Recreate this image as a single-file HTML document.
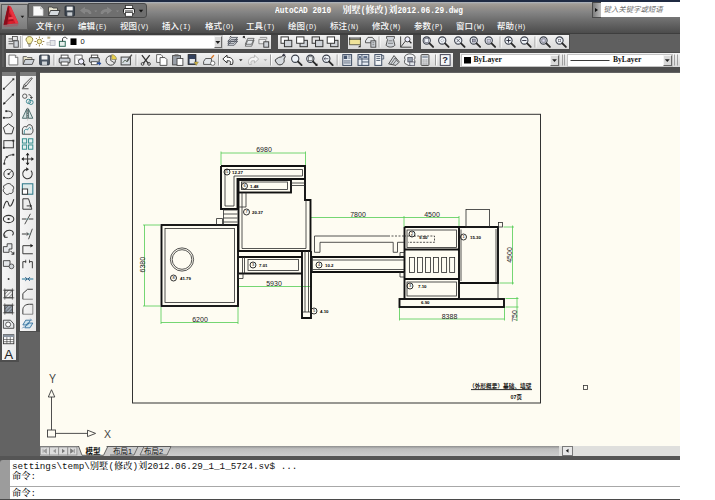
<!DOCTYPE html>
<html><head><meta charset="utf-8"><title>AutoCAD 2010</title>
<style>
html,body{margin:0;padding:0;background:#fff;}
body{width:715px;height:500px;position:relative;overflow:hidden;font-family:"Liberation Sans","Noto Sans CJK SC",sans-serif;}
#app{position:absolute;left:0;top:0;width:680px;height:500px;background:#636363;overflow:hidden;}
.abs{position:absolute;}
#topline{left:0;top:0;width:680px;height:1.5px;background:#1f2a42;}
#title{left:0;top:1.5px;width:680px;height:31px;background:linear-gradient(#b0b7c2 0,#a39e97 6%,#97928c 16%,#858585 32%,#6c6c6c 60%,#4c4c4c 100%);}
#menubar{display:none;}
#sep1{left:0;top:32.5px;width:680px;height:2px;background:#3e3e3e;}
#qat{left:28px;top:2.7px;width:118.7px;height:15.8px;background:#6f6f6f;border:1px solid #4a4a4a;box-sizing:border-box;border-radius:0 3px 3px 0;}
#logo{left:1px;top:3.5px;width:26.5px;height:26.5px;background:linear-gradient(#a2a2a2,#7a7a7a);border:1px solid #5c5c5c;box-sizing:border-box;}
.ttext{color:#fff;font-family:"Liberation Mono","Noto Serif CJK SC",monospace;font-weight:bold;font-size:9.1px;white-space:pre;line-height:10px;}
.ttext i{font-style:normal;font-size:7.8px;display:inline-block;transform:scaleY(1.22);transform-origin:50% 72%;}
.menu{color:#fafafa;font-weight:500;font-size:8.5px;line-height:12px;top:20px;white-space:pre;letter-spacing:0;}
.menu i{font-style:normal;font-family:"Liberation Mono",monospace;font-size:7px;letter-spacing:-0.3px;}
#search{left:592px;top:2px;width:88px;height:15px;background:#fff;}
#searchbtn{left:591.5px;top:2px;width:9.5px;height:15.5px;background:linear-gradient(90deg,#7c7c7c,#bcbcbc);border:1px solid #4a4a4a;border-right:none;box-sizing:border-box;}
#searchbtn:after{content:"";position:absolute;left:2.5px;top:4.5px;border-left:3.5px solid #111;border-top:2.8px solid transparent;border-bottom:2.8px solid transparent;}
#searchtxt{left:603.5px;top:4.3px;font-size:7.4px;line-height:11px;color:#707070;font-style:italic;white-space:pre;}
.tb{background:linear-gradient(#f2f2f2,#d9d9d9);}
.cb{background:#fff;border:1px solid #c4c4c4;box-sizing:border-box;}
.cbb{background:#d9d9d9;border:1px solid #f4f4f4;border-right-color:#6a6a6a;border-bottom-color:#6a6a6a;box-sizing:border-box;}
.cbt{font-family:"Liberation Serif",serif;font-weight:bold;font-size:7.6px;line-height:10px;color:#111;white-space:pre;}
.ltb{background:linear-gradient(90deg,#f6f6f6,#e9e9e9);}
.lgrip{background:#7c7c7c;}
.tabt{font-size:7.5px;line-height:9px;color:#111;white-space:pre;font-family:"Liberation Sans","Noto Sans CJK SC",sans-serif;}
#draw{left:39.5px;top:72.5px;width:640.5px;height:373.5px;background:#fefcf2;}
#cmd{left:0;top:458px;width:680px;height:42px;background:#fff;}
.cmdt{font-family:"Liberation Mono","Noto Serif CJK SC",monospace;font-size:9.27px;line-height:11px;color:#111;white-space:pre;font-weight:500;}
</style></head><body>
<div id="app" class="abs">
<div id="topline" class="abs"></div>
<div id="title" class="abs"></div>
<div id="menubar" class="abs"></div>
<div id="sep1" class="abs"></div>
<div id="qat" class="abs"></div>
<div id="logo" class="abs"></div>
<div class="abs ttext" id="tt1" style="left:275px;top:5.5px;"><i>AutoCAD 2010</i></div>
<div class="abs ttext" id="tt2" style="left:342.5px;top:5.5px;">别墅<i>(</i>修改<i>)</i>刘<i>2012.06.29.dwg</i></div>
<!-- QAT-START -->
<svg class="abs" style="left:0;top:0" width="160" height="34" viewBox="0 0 160 34">
<defs><linearGradient id="lgA" x1="0" y1="0" x2="1" y2="0"><stop offset="0" stop-color="#8e1020"/><stop offset="0.45" stop-color="#e0222e"/><stop offset="1" stop-color="#c01424"/></linearGradient></defs>
<!-- logo A -->
<path d="M3 25.300L18.800 23.600L17.500 26.200L4.500 27Z" fill="#b04a58" opacity="0.45"/>
<path d="M8 5.600L3.600 24.800L18.400 23.200L10.800 6.600Z" fill="url(#lgA)"/>
<path d="M8 5.600L3.600 24.800L7.200 24.400L9.300 9Z" fill="#8a0c1a"/>
<path d="M9.300 12.500L8 21.500L13.600 20.800Z" fill="#a81020"/>
<path d="M8.600 17.200L13 16.800L14 19L8.300 19.600Z" fill="#ee4450"/>
<path d="M9.300 9L10.800 6.600L18.400 23.200L15.500 23.500Z" fill="#e83442"/>
<path d="M20.600 15.800H24.200L22.400 17.900Z" fill="#1a1a1a"/>
<!-- new -->
<path d="M33.500 6.500H40.500L43 9V15.500H33.500Z" fill="#fafafa" stroke="#d0d0d0" stroke-width="0.800"/><path d="M40.500 6.500V9H43" fill="#cfcfcf" stroke="#bbb" stroke-width="0.600"/>
<!-- open -->
<path d="M48.500 15.500V7H52L53 8H57.500V10" fill="#e8e4d0" stroke="#444" stroke-width="0.900"/><path d="M48.500 15.500L50.500 10.500H60L58 15.500Z" fill="#d6dade" stroke="#333" stroke-width="0.900"/>
<!-- save -->
<rect x="65" y="6" width="9.500" height="10" rx="1" fill="#3d4650" stroke="#2a3038" stroke-width="0.900"/><rect x="66.700" y="6.600" width="6" height="3.800" fill="#f0f0f0"/><rect x="67.300" y="12.300" width="5" height="3.500" fill="#c8ccd0"/>
<!-- undo/redo disabled -->
<path d="M80.500 10.500L84.500 7.500V9.500C89 9.500 91 11 91 13.500H89C88.500 12 87.500 11.500 84.500 11.500V13.500Z" fill="#858585" stroke="#8f8f8f" stroke-width="0.600"/>
<path d="M94.300 10.500H97.300L95.800 12.300Z" fill="#888"/>
<path d="M111.500 10.500L107.500 7.500V9.500C103 9.500 101 11 101 13.500H103C103.500 12 104.500 11.500 107.500 11.500V13.500Z" fill="#858585" stroke="#8f8f8f" stroke-width="0.600"/>
<path d="M116 10.500H119L117.500 12.300Z" fill="#888"/>
<!-- plot -->
<rect x="125.500" y="5.500" width="7" height="3.500" fill="#fff" stroke="#333" stroke-width="0.800"/><rect x="123.500" y="8.500" width="11" height="5.500" rx="1.500" fill="#f2f2f2" stroke="#222" stroke-width="1"/><rect x="125.500" y="12.500" width="7" height="3.800" fill="#fff" stroke="#333" stroke-width="0.800"/><path d="M125 11H133" stroke="#333" stroke-width="1"/>
<path d="M138.800 9.800H143.200L141 12.500Z" fill="#111"/>
</svg>
<!-- QAT-END -->
<!-- menus -->
<div class="abs menu" style="left:36px;">文件<i>(F)</i></div>
<div class="abs menu" style="left:78px;">编辑<i>(E)</i></div>
<div class="abs menu" style="left:120px;">视图<i>(V)</i></div>
<div class="abs menu" style="left:162px;">插入<i>(I)</i></div>
<div class="abs menu" style="left:205px;">格式<i>(O)</i></div>
<div class="abs menu" style="left:246px;">工具<i>(T)</i></div>
<div class="abs menu" style="left:288px;">绘图<i>(D)</i></div>
<div class="abs menu" style="left:330px;">标注<i>(N)</i></div>
<div class="abs menu" style="left:372px;">修改<i>(M)</i></div>
<div class="abs menu" style="left:414px;">参数<i>(P)</i></div>
<div class="abs menu" style="left:456px;">窗口<i>(W)</i></div>
<div class="abs menu" style="left:497px;">帮助<i>(H)</i></div>
<div id="search" class="abs"></div>
<div id="searchbtn" class="abs"></div>
<div id="searchtxt" class="abs">键入关键字或短语</div>
<!-- TOOLBARS -->
<div class="abs" style="left:0;top:34.5px;width:680px;height:37.5px;background:#4e4e4e;"></div>
<div class="abs" style="left:570px;top:34px;width:110px;height:18px;background:#5f5f5f;"></div>
<div class="abs" style="left:0;top:71px;width:39.5px;height:260.5px;background:#4e4e4e;"></div>
<div class="abs" style="left:0;top:331px;width:18.5px;height:30.5px;background:#4e4e4e;"></div>
<div class="abs" style="left:2px;top:35px;width:2px;height:32px;background:#5c5c5c;"></div>
<!-- TB-START -->
<div class="abs tb" style="left:6px;top:34.5px;width:265px;height:14.5px;"></div>
<div class="abs tb" style="left:278px;top:34.5px;width:62px;height:14.5px;"></div>
<div class="abs tb" style="left:348px;top:34.5px;width:65px;height:14.5px;"></div>
<div class="abs tb" style="left:421px;top:34.5px;width:148px;height:14.5px;"></div>
<div class="abs tb" style="left:6px;top:53px;width:447px;height:14px;"></div>
<div class="abs tb" style="left:460px;top:53px;width:220px;height:14px;"></div>
<div class="abs cb" style="left:22px;top:35px;width:200.5px;height:13.5px;"></div>
<div class="abs cbb" style="left:213.5px;top:36px;width:8.5px;height:12px;"></div>
<div class="abs cb" style="left:461px;top:53.5px;width:98.5px;height:13px;"></div>
<div class="abs cbb" style="left:550px;top:54.5px;width:9px;height:11.5px;"></div>
<div class="abs cb" style="left:567px;top:53.5px;width:105.5px;height:13px;"></div>
<div class="abs cbb" style="left:662.5px;top:54.5px;width:9.5px;height:11.5px;"></div>
<div class="abs cbt" style="left:80.500px;top:37px;font-family:Liberation Sans,sans-serif;font-weight:normal;font-size:7.5px;">0</div>
<div class="abs cbt" style="left:473.500px;top:55px;">ByLayer</div>
<div class="abs cbt" style="left:613px;top:55px;">ByLayer</div>
<svg class="abs" style="left:0;top:0" width="680" height="80" viewBox="0 0 680 80"><g transform="translate(13.4 41.8) scale(0.98)"><path d="M-5 -3H0M-5 -0.500H0M-5 2H0" stroke="#444" stroke-width="0.9"/><rect x="-1" y="-5.500" width="5" height="4" fill="#e8e8e8" stroke="#444" stroke-width="0.800"/><rect x="0.500" y="-1" width="4.500" height="6.500" fill="#cfd3d8" stroke="#444" stroke-width="0.900"/></g>
<path d="M20.8 36V48" stroke="#9a9a9a" stroke-width="1"/><path d="M21.8 36V48" stroke="#fff" stroke-width="0.800"/>
<g transform="translate(29.4 41.5) scale(0.9)"><path d="M0 -5.500C3 -5.500 4.300 -3 3.500 -1C2.800 0.500 1.800 1 1.800 2.500H-1.800C-1.800 1 -2.800 0.500 -3.500 -1C-4.300 -3 -3 -5.500 0 -5.500Z" fill="#f6f0a8" stroke="#776a2a" stroke-width="0.900"/><path d="M-1.500 3.800H1.500M-1 5.200H1" stroke="#555" stroke-width="0.900"/></g>
<g transform="translate(39.4 41.5) scale(0.9)"><circle cx="0" cy="0" r="2.500" fill="#fbf2b0" stroke="#8a7a2a" stroke-width="0.900"/><path d="M0 -5.500V-3.600M0 5.500V3.600M-5.500 0H-3.600M5.500 0H3.600M-3.900 -3.900L-2.600 -2.600M3.900 3.900L2.600 2.600M-3.900 3.900L-2.600 2.600M3.900 -3.900L2.600 -2.600" stroke="#8a6a2a" stroke-width="0.900"/></g>
<g transform="translate(51 41.8) scale(0.9)"><path d="M-4.500 -4.500H-0.500M-2.500 -6V-3M-4 -5.500L-1 -3.500M-1 -5.500L-4 -3.500" stroke="#b9a97a" stroke-width="0.700"/><rect x="-1" y="-1.500" width="5.500" height="5.500" fill="#e6e8ea" stroke="#aab" stroke-width="0.800"/><rect x="-4.500" y="0.500" width="4" height="3" fill="#eee" stroke="#bbb" stroke-width="0.700"/></g>
<g transform="translate(63 41.8) scale(0.9)"><rect x="-4" y="-0.500" width="6.500" height="5.500" fill="#e8f0ec" stroke="#2f6a5a" stroke-width="1.100"/><path d="M-0.500 -0.500V-3C-0.500 -5.500 4 -6 4.500 -3" fill="none" stroke="#333" stroke-width="1.100"/></g>
<rect x="70.500" y="38.400" width="6" height="6.600" fill="#000"/>
<g transform="translate(217.8 42.2) scale(1.35)"><path d="M-1.800 -0.800H1.800L0 1.300Z" fill="#222"/></g>
<g transform="translate(232.7 41.8) scale(0.98)"><path d="M-5 3.500L-1.500 -0.500H5L1.500 3.500ZM-5 1.500L-1.500 -2.500H5L1.500 1.500ZM-5 -0.500L-1.500 -4.500H5L1.500 -0.500Z" fill="#e6e9ec" stroke="#3a3f4a" stroke-width="0.800"/><path d="M-3 -4.500L-1.500 -6" stroke="#333" stroke-width="1"/></g>
<g transform="translate(248.7 41.8) scale(0.98)"><path d="M-3.500 4.500L-1 -1.500H5.500L3 4.500ZM-3.500 2.500L-1 -3.500H5.500L3 2.500Z" fill="#e6e9ec" stroke="#555" stroke-width="0.800"/><path d="M-5.500 -5.500L-3.500 -3.500M-5.500 -5.500H-3.800M-5.500 -5.500V-3.800" stroke="#222" stroke-width="1"/></g>
<g transform="translate(263.8 41.8) scale(0.98)"><path d="M-5 -2.500H2V2H-5ZM-4 -4.500H3V-2.500" fill="#eee" stroke="#777" stroke-width="0.800"/><rect x="0" y="0" width="5" height="5.500" fill="#cfd3d8" stroke="#333" stroke-width="0.900"/></g>
<g transform="translate(286.4 41.8) scale(0.98)"><rect x="-5.500" y="-5" width="7.500" height="6.500" fill="#fff" stroke="#333" stroke-width="1"/><rect x="-2" y="-1.500" width="7.500" height="6.500" fill="#cfd3d8" stroke="#333" stroke-width="1"/></g>
<g transform="translate(302 41.8) scale(0.98)"><rect x="-2" y="-1.500" width="7.500" height="6.500" fill="#cfd3d8" stroke="#333" stroke-width="1"/><rect x="-5.500" y="-5" width="7.500" height="6.500" fill="#fff" stroke="#333" stroke-width="1"/></g>
<g transform="translate(317.5 41.8) scale(0.98)"><rect x="-5.500" y="-5" width="7.500" height="6.500" fill="#e6e6e6" stroke="#333" stroke-width="1"/><rect x="-2" y="-1.500" width="7.500" height="6.500" fill="#cfd3d8" stroke="#333" stroke-width="1"/></g>
<g transform="translate(332.6 41.8) scale(0.98)"><rect x="-2" y="-1.500" width="7.500" height="6.500" fill="#cfd3d8" stroke="#333" stroke-width="1"/><rect x="-5.500" y="-5" width="7.500" height="6.500" fill="#fff" stroke="#333" stroke-width="1"/></g>
<g transform="translate(355 41.8) scale(0.98)"><rect x="-5.500" y="-2.500" width="11" height="5.500" fill="#efe39a" stroke="#554" stroke-width="0.900"/><path d="M-5.500 -4.500V-2M5.500 -4.500V-2M-5.500 -3.800H5.500" stroke="#222" stroke-width="0.900"/><path d="M3 5.500H5.800V3Z" fill="#222"/></g>
<g transform="translate(370.4 41.8) scale(0.98)"><path d="M-5 -1L-2.500 -4.500H2L4 -2V1H-5Z" fill="#e4e7ea" stroke="#444" stroke-width="0.900"/><rect x="0.500" y="-1" width="5" height="6.500" fill="#cfd3d8" stroke="#444" stroke-width="0.900"/><path d="M2 1H4M2 3H4" stroke="#555" stroke-width="0.700"/></g>
<g transform="translate(390.5 41.8) scale(0.98)"><path d="M-4 -5.500H4V-3.500L3 -2.500L4.500 3.500C3 6 -3 6 -4.500 3.500L-3 -2.500L-4 -3.500Z" fill="#cfd3d8" stroke="#444" stroke-width="0.900"/><path d="M-2 -1H2M-2.500 1.500H2.500" stroke="#555" stroke-width="0.700"/></g>
<g transform="translate(406 41.8) scale(0.98)"><path d="M-5.500 -5.500V5.500H5.500M-5.500 5.500L0 -1.500" stroke="#333" stroke-width="0.900" fill="none"/><circle cx="1.500" cy="-2.500" r="2.600" fill="#eef" stroke="#333" stroke-width="0.900"/><path d="M3.300 -0.700L5.500 1.500" stroke="#222" stroke-width="1.300"/></g>
<g transform="translate(428 41.8) scale(0.98)"><circle cx="-1.3" cy="-1.3" r="3.7" fill="#eef3f8" stroke="#3a3f4a" stroke-width="1.1"/><path d="M1.6 1.6L5.2 5.2" stroke="#2b2b2b" stroke-width="1.9" stroke-linecap="round"/><rect x="-3.300" y="-3.300" width="4" height="4" fill="none" stroke="#667" stroke-width="0.700"/></g>
<g transform="translate(443.5 41.8) scale(0.98)"><circle cx="-1.3" cy="-1.3" r="3.7" fill="#eef3f8" stroke="#3a3f4a" stroke-width="1.1"/><path d="M1.6 1.6L5.2 5.2" stroke="#2b2b2b" stroke-width="1.9" stroke-linecap="round"/><path d="M-3 -1.300L-1.300 -3L0.400 -1.300L-1.300 0.400Z" fill="none" stroke="#667" stroke-width="0.600" stroke-dasharray="1 0.600"/></g>
<g transform="translate(459.5 41.8) scale(0.98)"><circle cx="-1.3" cy="-1.3" r="3.7" fill="#eef3f8" stroke="#3a3f4a" stroke-width="1.1"/><path d="M1.6 1.6L5.2 5.2" stroke="#2b2b2b" stroke-width="1.9" stroke-linecap="round"/><path d="M-3.300 -3.300L0.700 0.700M0.700 -3.300L-3.300 0.700" stroke="#445" stroke-width="0.800"/></g>
<g transform="translate(475 41.8) scale(0.98)"><circle cx="-1.3" cy="-1.3" r="3.7" fill="#eef3f8" stroke="#3a3f4a" stroke-width="1.1"/><path d="M1.6 1.6L5.2 5.2" stroke="#2b2b2b" stroke-width="1.9" stroke-linecap="round"/><rect x="-2.800" y="-2.800" width="3" height="3" fill="#aab" stroke="#445" stroke-width="0.600"/></g>
<g transform="translate(490 41.8) scale(0.98)"><circle cx="-1.3" cy="-1.3" r="3.7" fill="#eef3f8" stroke="#3a3f4a" stroke-width="1.1"/><path d="M1.6 1.6L5.2 5.2" stroke="#2b2b2b" stroke-width="1.9" stroke-linecap="round"/><path d="M-3 -2.500H0.500V0.500H-3Z" fill="#ccd" stroke="#667" stroke-width="0.600"/></g>
<g transform="translate(509.8 41.8) scale(0.98)"><circle cx="-1.3" cy="-1.3" r="3.7" fill="#eef3f8" stroke="#3a3f4a" stroke-width="1.1"/><path d="M1.6 1.6L5.2 5.2" stroke="#2b2b2b" stroke-width="1.9" stroke-linecap="round"/><path d="M-3.500 -1.300H0.900M-1.300 -3.500V0.900" stroke="#223" stroke-width="0.900"/></g>
<g transform="translate(525.6 41.8) scale(0.98)"><circle cx="-1.3" cy="-1.3" r="3.7" fill="#eef3f8" stroke="#3a3f4a" stroke-width="1.1"/><path d="M1.6 1.6L5.2 5.2" stroke="#2b2b2b" stroke-width="1.9" stroke-linecap="round"/><path d="M-3.500 -1.300H0.900" stroke="#223" stroke-width="0.900"/></g>
<g transform="translate(544.8 41.8) scale(0.98)"><circle cx="-1.3" cy="-1.3" r="3.7" fill="#eef3f8" stroke="#3a3f4a" stroke-width="1.1"/><path d="M1.6 1.6L5.2 5.2" stroke="#2b2b2b" stroke-width="1.9" stroke-linecap="round"/><rect x="-3" y="-3" width="3.400" height="3.400" fill="#dde" stroke="#556" stroke-width="0.700"/></g>
<g transform="translate(560.8 41.8) scale(0.98)"><circle cx="-1.3" cy="-1.3" r="3.7" fill="#eef3f8" stroke="#3a3f4a" stroke-width="1.1"/><path d="M1.6 1.6L5.2 5.2" stroke="#2b2b2b" stroke-width="1.9" stroke-linecap="round"/><path d="M-3.300 -3.300L0.700 0.700M0.700 -3.300L-3.300 0.700" stroke="#445" stroke-width="0.700"/><circle cx="-1.300" cy="-1.300" r="1" fill="#fff" stroke="#445" stroke-width="0.500"/></g>
<path d="M379.1 36.5V47.5" stroke="#9a9a9a" stroke-width="1"/><path d="M380.1 36.5V47.5" stroke="#fff" stroke-width="0.800"/>
<path d="M500.1 36.5V47.5" stroke="#9a9a9a" stroke-width="1"/><path d="M501.1 36.5V47.5" stroke="#fff" stroke-width="0.800"/>
<path d="M535.0 36.5V47.5" stroke="#9a9a9a" stroke-width="1"/><path d="M536.0 36.5V47.5" stroke="#fff" stroke-width="0.800"/>
<g transform="translate(13.4 60) scale(0.98)"><path d="M-4.5 -5H2L4.500 -2.500V5H-4.500Z" fill="#fff" stroke="#666" stroke-width="0.9"/><path d="M2 -5V-2.500H4.500" fill="#ddd" stroke="#666" stroke-width="0.8"/></g>
<g transform="translate(28.5 60) scale(0.98)"><path d="M-5.500 4.500V-3.500H-2L-1 -2.500H3.500V-0.500" fill="#e9e3c8" stroke="#555" stroke-width="0.9"/><path d="M-5.500 4.500L-3.500 -0.500H5.800L3.800 4.500Z" fill="#cfd4da" stroke="#444" stroke-width="0.9"/></g>
<g transform="translate(44.5 60) scale(0.98)"><rect x="-5" y="-5" width="10" height="10" rx="1" fill="#4a5563" stroke="#2c333d" stroke-width="0.9"/><rect x="-3" y="-4.500" width="6" height="4" fill="#f4f4f4"/><rect x="-2.500" y="1.500" width="5" height="3.500" fill="#d0d4d8"/></g>
<g transform="translate(64.6 60) scale(0.98)"><rect x="-3.500" y="-5" width="7" height="3.500" fill="#fff" stroke="#444" stroke-width="0.9"/><rect x="-5.500" y="-2" width="11" height="5" rx="1" fill="#c9ced4" stroke="#333" stroke-width="1"/><rect x="-3.500" y="2" width="7" height="3.300" fill="#fff" stroke="#444" stroke-width="0.9"/></g>
<g transform="translate(79.7 60) scale(0.98)"><path d="M-5 -5H2.500V1M-5 -5V4.500H-0.500" fill="#fff" stroke="#555" stroke-width="0.9"/><circle cx="1.500" cy="1.500" r="2.800" fill="#eef" stroke="#333" stroke-width="1"/><path d="M3.600 3.600L5.500 5.500" stroke="#222" stroke-width="1.600"/></g>
<g transform="translate(94.8 60) scale(0.98)"><rect x="-3.500" y="-5" width="6.500" height="3" fill="#fff" stroke="#444" stroke-width="0.9"/><rect x="-5.500" y="-2.300" width="10" height="4.600" rx="1" fill="#c9ced4" stroke="#333" stroke-width="1"/><rect x="-3.500" y="1.800" width="6" height="3" fill="#fff" stroke="#444" stroke-width="0.8"/><path d="M2 3.500H5.500M4 2L5.800 3.600L4 5.200" stroke="#2a4f9a" stroke-width="1.200" fill="none"/></g>
<g transform="translate(111.2 60) scale(0.98)"><circle cx="-0.500" cy="0.500" r="4.800" fill="#e8e8e8" stroke="#444" stroke-width="1"/><path d="M-0.500 0.500V-4.300M-0.500 0.500L3.500 3" stroke="#444" stroke-width="0.9"/><path d="M0.500 -5.500A5 5 0 0 1 5.500 -0.500L0.500 -0.500Z" fill="#e8d04a" stroke="#776" stroke-width="0.600"/></g>
<g transform="translate(126.5 60) scale(0.98)"><rect x="-5.500" y="-3" width="9.500" height="8" fill="#d8dde2" stroke="#444" stroke-width="1"/><path d="M-4 3L-1.500 0L0.500 2L2.500 -1" stroke="#5a6a5a" stroke-width="0.9" fill="none"/><path d="M5.500 -5.500L0.500 1" stroke="#555" stroke-width="1.400"/></g>
<g transform="translate(145.8 60) scale(0.98)"><path d="M-4 -5L2.500 3.500M4 -5L-2.500 3.500" stroke="#333" stroke-width="1.300"/><circle cx="-3.300" cy="4" r="1.400" fill="none" stroke="#333" stroke-width="0.9"/><circle cx="3.300" cy="4" r="1.400" fill="none" stroke="#333" stroke-width="0.9"/></g>
<g transform="translate(162 60) scale(0.98)"><path d="M-5.500 -5.500H-1L0.500 -4V2.500H-5.500Z" fill="#fff" stroke="#555" stroke-width="0.9"/><path d="M-2 -2.500H3L5 -0.500V5.500H-2Z" fill="#fff" stroke="#444" stroke-width="0.9"/></g>
<g transform="translate(178 60) scale(0.98)"><rect x="-5.500" y="-4.500" width="8" height="9.500" fill="#9aa0a8" stroke="#444" stroke-width="0.9"/><rect x="-3.500" y="-5.800" width="4" height="2" fill="#666"/><rect x="-1" y="-1.500" width="6" height="7" fill="#fff" stroke="#444" stroke-width="0.9"/></g>
<g transform="translate(193 60) scale(0.98)"><rect x="-5" y="-5.500" width="8" height="10" fill="#34425e" stroke="#222" stroke-width="0.800"/><rect x="-3.500" y="-1" width="5.500" height="4.500" fill="#e4e7ea"/><path d="M1 2L5.500 2L3.300 5.500Z" fill="#d6b43a" stroke="#775" stroke-width="0.500"/></g>
<g transform="translate(209 60) scale(0.98)"><path d="M-5.500 1.500L-3.500 -1.500H2.500V4.500H-5.500Z" fill="#e4e7ea" stroke="#444" stroke-width="0.9"/><circle cx="3.800" cy="3.300" r="2.200" fill="#fff" stroke="#555" stroke-width="0.800"/><path d="M2.500 -2L5 -5" stroke="#d8782a" stroke-width="1.500"/></g>
<g transform="translate(228.5 60) scale(0.98)"><path d="M-5.800 -1L-1.500 -5V-2.800C4 -3 5.500 0.500 4 4.500H1.500C3 1.500 2 0.600 -1.500 0.800V3Z" fill="#fff" stroke="#2d2d2d" stroke-width="1"/></g>
<g transform="translate(240.8 60) scale(0.98)"><path d="M-1.800 -0.800H1.800L0 1.300Z" fill="#222"/></g>
<g transform="translate(253 60) scale(0.98)"><path d="M5.800 -1L1.500 -5V-2.800C-4 -3 -5.500 0.500 -4 4.500H-1.500C-3 1.500 -2 0.600 1.500 0.800V3Z" fill="#f4f4f4" stroke="#b4b4b4" stroke-width="1"/></g>
<g transform="translate(265.4 60) scale(0.98)"><path d="M-1.800 -0.800H1.800L0 1.300Z" fill="#aaa"/></g>
<g transform="translate(280.5 60) scale(0.98)"><path d="M-5.500 0C-3 -2 -1 -3.500 1 -3L3 -5.500L5 -3.500L3.500 -1C4.500 1.500 3 4.500 -0.500 5C-3 5 -4.500 3 -5.500 0Z" fill="#d6dade" stroke="#3a3a3a" stroke-width="1"/><path d="M3.500 -6.500V-3.500M2 -5H5" stroke="#223" stroke-width="0.9"/></g>
<g transform="translate(296.5 60) scale(0.98)"><circle cx="-1.3" cy="-1.3" r="3.7" fill="#eef3f8" stroke="#3a3f4a" stroke-width="1.1"/><path d="M1.6 1.6L5.2 5.2" stroke="#2b2b2b" stroke-width="1.9" stroke-linecap="round"/></g>
<g transform="translate(311.6 60) scale(0.98)"><circle cx="-1.3" cy="-1.3" r="3.7" fill="#eef3f8" stroke="#3a3f4a" stroke-width="1.1"/><path d="M1.6 1.6L5.2 5.2" stroke="#2b2b2b" stroke-width="1.9" stroke-linecap="round"/><rect x="-3.300" y="-3.300" width="4" height="4" fill="none" stroke="#555" stroke-width="0.700"/><path d="M3.500 5.500H5.800V3.200Z" fill="#222"/></g>
<g transform="translate(327.6 60) scale(0.98)"><circle cx="-1.3" cy="-1.3" r="3.7" fill="#eef3f8" stroke="#3a3f4a" stroke-width="1.1"/><path d="M1.6 1.6L5.2 5.2" stroke="#2b2b2b" stroke-width="1.9" stroke-linecap="round"/><path d="M-3.500 -1.300H0.800M-2 -2.800L-3.600 -1.300L-2 0.200" stroke="#445" stroke-width="0.800" fill="none"/></g>
<g transform="translate(347.2 60) scale(0.98)"><rect x="-4.500" y="-5.500" width="9" height="11" fill="#e6ebf2" stroke="#3c4a60" stroke-width="1"/><rect x="-3.500" y="-4.500" width="3.500" height="3.500" fill="#44546e"/><path d="M-3.500 1H3.500M-3.500 3H3.500M1 -4H3.500M1 -2H3.500" stroke="#3c4a60" stroke-width="0.800"/></g>
<g transform="translate(363.4 60) scale(0.98)"><rect x="-5.500" y="-5.500" width="11" height="11" fill="#e6ebf2" stroke="#3c4a60" stroke-width="1"/><path d="M-1.500 -5.500V5.500M-5.500 -1H5.500M-1.500 2H5.500" stroke="#3c4a60" stroke-width="0.9"/><rect x="0" y="-4" width="4" height="2" fill="#5a6a86"/><rect x="-4.500" y="-4" width="2" height="2" fill="#5a6a86"/></g>
<g transform="translate(378.8 60) scale(0.98)"><rect x="-4" y="-5.500" width="7" height="11" fill="#f2f4f6" stroke="#3c4a60" stroke-width="1"/><path d="M-2.500 -3.500H1.500M-2.500 -1.500H1.500M-2.500 0.500H1.500M3 -4.500H5V-1H3" stroke="#3c4a60" stroke-width="0.800" fill="none"/></g>
<g transform="translate(394 60) scale(0.98)"><path d="M-5.500 4L0 -4.500L5.500 2L2 5.500Z" fill="#d2d6da" stroke="#444" stroke-width="0.9"/><path d="M-3.500 4.500L1 -2L4 2M-1.500 5L2.500 0" stroke="#555" stroke-width="0.800" fill="none"/></g>
<g transform="translate(409.8 60) scale(0.98)"><path d="M-3 -5.500C-1 -6.500 1 -6.500 3 -5.500C5.500 -5 6 -2 4.500 -0.500C6 1.500 5 4.500 2.500 4.500C0.500 6 -1.500 6 -3 4.500C-5.500 4.500 -6 1.500 -4.800 -0.500C-6 -2.500 -5 -5 -3 -5.500Z" fill="#f2f4f6" stroke="#444" stroke-width="0.9"/><rect x="-2" y="-2.500" width="4.500" height="4.500" fill="#9aa4b0" stroke="#445" stroke-width="0.700"/><rect x="0" y="2" width="5" height="3.500" fill="#dfe3e8" stroke="#445" stroke-width="0.700"/></g>
<g transform="translate(425 60) scale(0.98)"><rect x="-4" y="-5.500" width="8" height="11" rx="0.800" fill="#e9ebee" stroke="#444" stroke-width="1"/><rect x="-2.800" y="-4.300" width="5.600" height="2.300" fill="#9aa4b0"/><path d="M-2.500 0H2.500M-2.500 2H2.500M-2.500 4H2.500" stroke="#666" stroke-width="0.900" stroke-dasharray="1.200 0.700"/></g>
<g transform="translate(445.2 60) scale(0.98)"><rect x="-5" y="-5.500" width="10" height="11" fill="#f4f6f8" stroke="#445" stroke-width="1"/><text x="0" y="3.500" font-size="9.500" font-weight="bold" text-anchor="middle" font-family="Liberation Sans,sans-serif" fill="#223">?</text></g>
<path d="M54.0 54.5V65.5" stroke="#9a9a9a" stroke-width="1"/><path d="M55.0 54.5V65.5" stroke="#fff" stroke-width="0.800"/>
<path d="M136.0 54.5V65.5" stroke="#9a9a9a" stroke-width="1"/><path d="M137.0 54.5V65.5" stroke="#fff" stroke-width="0.800"/>
<path d="M218.5 54.5V65.5" stroke="#9a9a9a" stroke-width="1"/><path d="M219.5 54.5V65.5" stroke="#fff" stroke-width="0.800"/>
<path d="M270.5 54.5V65.5" stroke="#9a9a9a" stroke-width="1"/><path d="M271.5 54.5V65.5" stroke="#fff" stroke-width="0.800"/>
<path d="M337.2 54.5V65.5" stroke="#9a9a9a" stroke-width="1"/><path d="M338.2 54.5V65.5" stroke="#fff" stroke-width="0.800"/>
<path d="M435.5 54.5V65.5" stroke="#9a9a9a" stroke-width="1"/><path d="M436.5 54.5V65.5" stroke="#fff" stroke-width="0.800"/>
<rect x="464" y="57" width="7" height="6.500" fill="#000"/>
<g transform="translate(554.5 60.3) scale(1.35)"><path d="M-1.800 -0.800H1.800L0 1.300Z" fill="#222"/></g>
<g transform="translate(667.3 60.3) scale(1.35)"><path d="M-1.800 -0.800H1.800L0 1.300Z" fill="#222"/></g>
<path d="M570.500 60.500H609.500" stroke="#222" stroke-width="0.900"/>
<path d="M562.500 54.500V65.500M564.500 54.500V65.500M674.500 54.500V65.500M677.500 54.500V65.500" stroke="#999" stroke-width="0.900"/></svg>
<!-- TB-END -->
<!-- drawing -->
<div id="draw" class="abs"></div>
<!-- DRAWING-SVG-START -->
<svg class="abs" style="left:0;top:0" width="680" height="500" viewBox="0 0 680 500">
<g fill="none" stroke="#222" stroke-width="1" shape-rendering="auto">
<!-- paper -->
<rect x="132.500" y="114.300" width="408" height="288.700" stroke="#333" stroke-width="1"/>
</g>
<!-- green dims -->
<g fill="none" stroke="#52cc52" stroke-width="0.8">
<path d="M221 153H305.5M221 151.5V165M305.5 151.5V165"/>
<path d="M144.5 225V306M143 225H160M143 306H160"/>
<path d="M161 322.5H238M161 307V324M238 307V324"/>
<path d="M238.5 286.5H311M238.5 278V288M311 273V288"/>
<path d="M311 217.5H404M404 217.5H459M404 216V227M459 216V227"/>
<path d="M512.500 225.500V284.500M503.500 227H514M499.500 283H514"/>
<path d="M399.5 319H504.5M399.500 307V320.5M504.500 307V320.500"/>
<path d="M517 297V321M505.500 298.500H518.500M505.500 307H518.500"/>
</g>
<!-- thick walls -->
<g fill="none" stroke="#111" stroke-width="1.9" stroke-linejoin="miter">
<!-- L shape -->
<path d="M221 166H305V200H310.500V251M221 166V209H237.500V179H305"/>
<!-- room 6 bar -->
<rect x="238.500" y="180" width="52.500" height="12.500"/>
<!-- room 7 -->
<path d="M238.500 192.500V251H310.500"/>
<!-- square room 8 -->
<rect x="161.500" y="225" width="76.500" height="81"/>
<!-- room 3 bar -->
<path d="M238.500 257H302M238.500 273.500H302"/>
<!-- vertical bar -->
<path d="M302 251V318H311V251"/>
<!-- corridor -->
<path d="M311 257H404M311 272H404"/>
<!-- right building -->
<path d="M404.500 227H498V283H459V227M404.500 227V298.500M404.500 249.500H459M404.500 279H459M459 283V298.500"/>
<rect x="399.500" y="299" width="104.500" height="8"/>
</g>
<!-- thin lines -->
<g fill="none" stroke="#2a2a2a" stroke-width="0.8">
<path d="M225 169.500H302.500V176H234V206H225Z"/>
<rect x="241.500" y="182" width="46" height="7.500"/>
<path d="M291 183H305M291 185.500H305"/>
<path d="M242 192.500V248.500H306V200M246 192.500V207H238.500"/>
<path d="M223.500 210H237.500M223.500 214H237.500M223.500 218H237.500M223.500 222H237.500M223.500 209V225M216.500 218.500H222.500V225H216.500Z"/>
<rect x="165" y="228.500" width="69.500" height="74"/>
<circle cx="182" cy="259.500" r="11.600"/><circle cx="182" cy="259.500" r="9.800"/>
<rect x="248" y="259.500" width="50.500" height="11"/>
<path d="M242.500 257V273.500M238.500 273.500V278.500H243V273.500M244.500 257V273.500"/>
<path d="M305 251V312M308.500 251V312M302 312H311"/>
<path d="M312.500 260H404M312.500 269.500H404M312.500 257V272"/>
<path d="M314.500 252.300V236H388M320 252.300V242.300H393.200V252.300M397.500 252.300V242.300H404M314.500 252.300H320M393.200 252.300H397.500"/>
<path d="M388 236H404" stroke-dasharray="2 1.500"/>
<path d="M404 236H434.500V242.300H408" stroke-dasharray="2 1.300"/>
<path d="M400 252.500H404.500V257H400ZM400 272H404.500V277H400Z"/>
<rect x="407" y="230" width="49.500" height="17.500"/>
<rect x="407" y="282" width="49.500" height="14"/>
<rect x="409.50" y="257.500" width="5" height="15"/><rect x="417.53" y="257.500" width="5" height="15"/><rect x="425.56" y="257.500" width="5" height="15"/><rect x="433.59" y="257.500" width="5" height="15"/><rect x="441.62" y="257.500" width="5" height="15"/><rect x="449.65" y="257.500" width="5" height="15"/>
<path d="M461 229.500V281M496 229V283M459 298.500H498V283"/>
<rect x="466" y="209.500" width="23.500" height="17.500"/>
<rect x="498.500" y="222.500" width="4" height="4.500"/>
<!-- small pick square -->
<rect x="583.500" y="385.500" width="4" height="4" stroke="#333"/>
<!-- circles w/ numbers -->
<circle cx="227" cy="172" r="3" stroke="#1c1c1c" stroke-width="0.9"/><circle cx="244.500" cy="186" r="3" stroke="#1c1c1c" stroke-width="0.9"/><circle cx="246.500" cy="212" r="3" stroke="#1c1c1c" stroke-width="0.9"/>
<circle cx="173.500" cy="278" r="3" stroke="#1c1c1c" stroke-width="0.9"/><circle cx="253" cy="265" r="3" stroke="#1c1c1c" stroke-width="0.9"/><circle cx="319" cy="265" r="3" stroke="#1c1c1c" stroke-width="0.9"/>
<circle cx="314" cy="311" r="3" stroke="#1c1c1c" stroke-width="0.9"/><circle cx="412" cy="234" r="3" stroke="#1c1c1c" stroke-width="0.9"/><circle cx="463.500" cy="237" r="3" stroke="#1c1c1c" stroke-width="0.9"/><circle cx="410" cy="286" r="3" stroke="#1c1c1c" stroke-width="0.9"/>
</g>
<!-- UCS icon -->
<g fill="none" stroke="#3c3c3c" stroke-width="0.9">
<path d="M51.500 430V397M48.300 397L51.500 389.700L54.800 397ZM55.500 433.400H87.500M87.500 430.200L95.600 433.400L87.500 436.600Z"/>
<rect x="47.500" y="430" width="8" height="7"/>
</g>
<g font-family="'Liberation Sans',sans-serif" fill="#222">
<text x="264" y="152.300" font-size="7" text-anchor="middle">6980</text>
<text x="358" y="216.800" font-size="7" text-anchor="middle">7800</text>
<text x="432" y="217" font-size="7" text-anchor="middle">4500</text>
<text x="274" y="286.300" font-size="7" text-anchor="middle">5930</text>
<text x="200" y="321.500" font-size="7" text-anchor="middle">6200</text>
<text x="449.500" y="319" font-size="7" text-anchor="middle">8388</text>
<text transform="translate(144.800 264.700) rotate(-90)" font-size="7" text-anchor="middle">6380</text>
<text transform="translate(511.800 255) rotate(-90)" font-size="7" text-anchor="middle">4500</text>
<text transform="translate(516.700 316) rotate(-90)" font-size="7" text-anchor="middle">750</text>
<g font-size="4.400" font-weight="bold" fill="#000">
<text x="232" y="173.500">12.27</text><text x="250" y="187.500">1.48</text><text x="252" y="213.500">20.37</text>
<text x="180" y="279.500">41.79</text><text x="259" y="266.500">7.01</text><text x="325" y="266.500">10.2</text>
<text x="320" y="312.500">4.10</text><text x="419" y="238.500">9.50</text><text x="470" y="238.500">15.30</text><text x="418" y="287.500">7.10</text><text x="421" y="304">6.90</text>
</g>
<g font-size="4" text-anchor="middle" fill="#000">
<text x="227" y="173.300">5</text><text x="244.500" y="187.300">6</text><text x="246.500" y="213.300">7</text><text x="173.500" y="279.300">8</text>
<text x="253" y="266.300">3</text><text x="319" y="266.300">4</text><text x="314" y="312.300">5</text><text x="412" y="235.300">2</text><text x="463.500" y="238.300">1</text><text x="410" y="287.300">3</text>
</g>
<text x="49" y="382.500" font-size="12.500" fill="#444" textLength="7" lengthAdjust="spacingAndGlyphs">Y</text>
<text x="104" y="437.700" font-size="11" fill="#444" textLength="7" lengthAdjust="spacingAndGlyphs">X</text>
</g>
<g font-family="'Liberation Sans','Noto Sans CJK SC',sans-serif" fill="#111" font-weight="bold">
<text x="469" y="387.600" font-size="5.600" textLength="62.500" lengthAdjust="spacingAndGlyphs">（外形概要）基础、墙壁</text>
<text x="510.500" y="398.600" font-size="5.500" textLength="11.300" lengthAdjust="spacingAndGlyphs">07页</text>
<path d="M471 389.600H532" stroke="#111" stroke-width="0.9"/>
</g>
</svg>
<!-- DRAWING-SVG-END -->
<!-- bottom -->
<!-- LB-START -->
<div class="abs ltb" style="left:1.5px;top:71.5px;width:14.5px;height:288.5px;"></div>
<div class="abs ltb" style="left:20px;top:71.5px;width:15.500px;height:259px;"></div>
<div class="abs lgrip" style="left:1.5px;top:71.5px;width:14.5px;height:4px;"></div>
<div class="abs lgrip" style="left:20px;top:71.5px;width:15.500px;height:4px;"></div>
<svg class="abs" style="left:0;top:70px" width="40" height="300" viewBox="0 70 40 300"><g transform="translate(8.6 84) scale(0.95)"><path d="M-5 5L5 -5" stroke="#333" stroke-width="1"/><rect x="-6" y="4" width="2" height="2" fill="#333"/><rect x="4" y="-6" width="2" height="2" fill="#333"/></g>
<g transform="translate(8.6 99) scale(0.95)"><path d="M-5 5L5 -5" stroke="#333" stroke-width="1"/><path d="M-6 6L-3 5L-5 3ZM6 -6L3 -5L5 -3Z" fill="#222"/></g>
<g transform="translate(8.6 114) scale(0.95)"><path d="M-5 4H0C5 4 5 -3 0 -3H-2" stroke="#333" stroke-width="1" fill="none"/><rect x="-6" y="3" width="2" height="2" fill="#333"/><rect x="-3.500" y="-4" width="2" height="2" fill="#333"/></g>
<g transform="translate(8.6 129) scale(0.95)"><path d="M0 -5.500L5.500 -1.500L3.500 5H-3.500L-5.500 -1.500Z" fill="none" stroke="#333" stroke-width="1"/></g>
<g transform="translate(8.6 144) scale(0.95)"><rect x="-5" y="-3.500" width="10" height="7.500" fill="none" stroke="#333" stroke-width="1"/><rect x="-6" y="3" width="2" height="2" fill="#333"/><rect x="4" y="-4.500" width="2" height="2" fill="#333"/></g>
<g transform="translate(8.6 159) scale(0.95)"><path d="M-4.500 5C-4.500 -1 -1 -4.500 5 -4.500" fill="none" stroke="#333" stroke-width="1"/><rect x="-5.500" y="4" width="2" height="2" fill="#333"/><rect x="4" y="-5.500" width="2" height="2" fill="#333"/><rect x="-3" y="-3" width="2" height="2" fill="#333"/></g>
<g transform="translate(8.6 174) scale(0.95)"><circle r="5" fill="none" stroke="#333" stroke-width="1"/><path d="M0 0L3.500 -3.500" stroke="#333" stroke-width="0.900"/><rect x="-1" y="-1" width="2" height="2" fill="#333"/></g>
<g transform="translate(8.6 189) scale(0.95)"><path d="M-3 -4.500C-1 -6.500 2 -6 3 -4C5.500 -3.500 6 -0.500 4.500 1C5.500 3.500 3 5.500 1 4.500C-0.500 6.500 -3.500 6 -4 4C-6 3 -6 0.500 -4.800 -0.500C-6 -2.500 -5 -4.500 -3 -4.500Z" fill="none" stroke="#333" stroke-width="1"/></g>
<g transform="translate(8.6 204) scale(0.95)"><path d="M-5.500 4.500C-3 -5 -1 -4 0 0C1 4 3 3 5.500 -5" fill="none" stroke="#333" stroke-width="1.100"/></g>
<g transform="translate(8.6 219) scale(0.95)"><ellipse rx="5.500" ry="3.800" fill="none" stroke="#333" stroke-width="1.100"/><rect x="-1" y="-1" width="2" height="2" fill="#333"/></g>
<g transform="translate(8.6 234) scale(0.95)"><path d="M-4 3.500C-7 0 -3 -4.500 1.500 -4C5 -3.500 6 -0.500 4 1.500" fill="none" stroke="#333" stroke-width="1.100"/><path d="M-4 3.500H-1M-4 3.500V0.800" stroke="#333" stroke-width="1"/></g>
<g transform="translate(8.6 249) scale(0.95)"><path d="M-5.500 -2.500H-1.500V-5.500H3.500V0H0.500V3.500H-5.500Z" fill="#e6e8ea" stroke="#333" stroke-width="0.900"/><path d="M2 2L5.500 5.500M5.500 5.500H3M5.500 5.500V3" stroke="#222" stroke-width="1"/></g>
<g transform="translate(8.6 264) scale(0.95)"><path d="M-5.500 -3.500H1.500V2.500H-5.500Z" fill="#e6e8ea" stroke="#333" stroke-width="0.900"/><circle cx="3" cy="2.500" r="2.500" fill="#d0d4d8" stroke="#444" stroke-width="0.900"/></g>
<g transform="translate(8.6 279) scale(0.95)"><circle r="1" fill="#333"/></g>
<g transform="translate(8.6 294) scale(0.95)"><rect x="-4" y="-4" width="8" height="8" fill="none" stroke="#333" stroke-width="0.900"/><path d="M-4 0L0 -4M-4 4L4 -4M0 4L4 0M-6 -4H6M-6 4H6M-4 -6V6M4 -6V6" stroke="#444" stroke-width="0.700"/></g>
<g transform="translate(8.6 309) scale(0.95)"><rect x="-4" y="-4" width="8" height="8" fill="#9aa4b0" stroke="#333" stroke-width="0.900"/><path d="M-4 0L0 -4M-4 4L4 -4M0 4L4 0M-6 -4H6M-6 4H6M-4 -6V6M4 -6V6" stroke="#444" stroke-width="0.700"/></g>
<g transform="translate(8.6 324) scale(0.95)"><path d="M-5.500 -4H2L5.500 0V4.500H-5.500Z" fill="#e6e8ea" stroke="#333" stroke-width="0.900"/><circle cx="-0.500" cy="0.500" r="2.600" fill="#fff" stroke="#444" stroke-width="0.900"/></g>
<g transform="translate(8.6 339) scale(0.95)"><rect x="-5.500" y="-4.500" width="11" height="9.500" fill="#fff" stroke="#333" stroke-width="0.900"/><rect x="-5.500" y="-4.500" width="11" height="2.500" fill="#8a94a0"/><path d="M-5.500 0.500H5.500M-5.500 2.800H5.500M-1.800 -2V5M1.800 -2V5" stroke="#444" stroke-width="0.700"/></g>
<g transform="translate(8.6 354) scale(0.95)"><text x="0" y="5" font-size="14" text-anchor="middle" font-family="Liberation Sans,sans-serif" fill="#222">A</text></g>
<g transform="translate(27.6 84) scale(0.95)"><path d="M5 -6L-1.500 2L-3.500 0.500L3.500 -6.500Z" fill="#e0e0e0" stroke="#333" stroke-width="0.800"/><path d="M-3.500 0.500L-5 4L-1.500 2M-6 5H1" stroke="#333" stroke-width="0.900" fill="none"/></g>
<g transform="translate(27.6 99) scale(0.95)"><circle cx="-3" cy="-3" r="2.300" fill="none" stroke="#444" stroke-width="0.900"/><circle cx="1" cy="2.500" r="2.300" fill="none" stroke="#2f7f8a" stroke-width="0.900"/><circle cx="3.500" cy="3.500" r="2.300" fill="none" stroke="#2f7f8a" stroke-width="0.900"/><path d="M1 -4.500C3 -4.500 4 -3.500 4 -1M4 -0.500L2.800 -2M4 -0.500L5.200 -2" stroke="#222" stroke-width="0.900" fill="none"/></g>
<g transform="translate(27.6 114) scale(0.95)"><path d="M-0.800 -5.500V4.500H-5.500ZM0.800 -5.500V4.500H5.500Z" fill="#d8e4e4" stroke="#3a5a5a" stroke-width="0.900"/><path d="M0 -6.500V6.500" stroke="#333" stroke-width="0.600" stroke-dasharray="1.500 1"/></g>
<g transform="translate(27.6 129) scale(0.95)"><path d="M-5.500 5.500V1C-5.500 -2 -3 -3.500 -1 -2C0 -6 5.500 -5 5 -1C6.500 1 5.500 5.500 3 5.500Z" fill="none" stroke="#333" stroke-width="0.900"/><path d="M-3.500 5.500V2C-3 0 -1 0 0 1C1 -2.500 3.500 -2 3.300 0.500" fill="none" stroke="#2f7f8a" stroke-width="0.900"/></g>
<g transform="translate(27.6 144) scale(0.95)"><rect x="-5.500" y="-5.500" width="4.500" height="4.500" fill="#e4f0f0" stroke="#2f8a8a" stroke-width="1"/><rect x="1" y="-5.500" width="4.500" height="4.500" fill="#e4f0f0" stroke="#2f8a8a" stroke-width="1"/><rect x="-5.500" y="1" width="4.500" height="4.500" fill="#e4f0f0" stroke="#2f8a8a" stroke-width="1"/><rect x="1" y="1" width="4.500" height="4.500" fill="#e4f0f0" stroke="#2f8a8a" stroke-width="1"/></g>
<g transform="translate(27.6 159) scale(0.95)"><path d="M0 -6V6M-6 0H6" stroke="#333" stroke-width="1.100"/><path d="M0 -6.500L-2 -4H2ZM0 6.500L-2 4H2ZM-6.500 0L-4 -2V2ZM6.500 0L4 -2V2Z" fill="#222"/></g>
<g transform="translate(27.6 174) scale(0.95)"><path d="M3.500 -3.500A5 5 0 1 1 -1 -5" fill="none" stroke="#333" stroke-width="1.100"/><path d="M-1.500 -7L1.500 -5L-1.500 -3Z" fill="#222"/></g>
<g transform="translate(27.6 189) scale(0.95)"><rect x="-5.500" y="-5.500" width="11" height="11" fill="#dfeaea" stroke="#2f7a8a" stroke-width="1.100"/><rect x="-5.500" y="0" width="5.500" height="5.500" fill="#fff" stroke="#333" stroke-width="1"/></g>
<g transform="translate(27.6 204) scale(0.95)"><path d="M-5 -5.500H1L4.500 5.500H-5Z" fill="#eee" stroke="#333" stroke-width="1"/><path d="M-1 2H4M4 2L2.300 0.500M4 2L2.300 3.500" stroke="#222" stroke-width="0.900" fill="none"/></g>
<g transform="translate(27.6 219) scale(0.95)"><path d="M-6 0H-1.500M1.500 0H6" stroke="#333" stroke-width="1"/><path d="M3 -5.500L-3 5.500" stroke="#333" stroke-width="0.900"/><path d="M-1.500 0H1.500" stroke="#2f8a8a" stroke-width="0.800" stroke-dasharray="1 0.800"/></g>
<g transform="translate(27.6 234) scale(0.95)"><path d="M-6 0H0" stroke="#333" stroke-width="1"/><path d="M5 -5.500L1 5.500" stroke="#333" stroke-width="0.900"/><path d="M0 0H3" stroke="#2f8a8a" stroke-width="0.800" stroke-dasharray="1 0.800"/><path d="M-1 -1.500L1 0L-1 1.500" stroke="#222" stroke-width="0.800" fill="none"/></g>
<g transform="translate(27.6 249) scale(0.95)"><path d="M-5 5V-3.500H5.500" fill="none" stroke="#333" stroke-width="1"/><path d="M-5 5H5.500" stroke="#333" stroke-width="1"/><path d="M3 -5.500L5.800 -3.500L3 -1.500Z" fill="#222"/></g>
<g transform="translate(27.6 264) scale(0.95)"><path d="M-5 4.500V-2.500H-1.500M1.500 -2.500H5V4.500" fill="none" stroke="#333" stroke-width="1"/><path d="M-2 -4.500V-1M2 -4.500V-1" stroke="#333" stroke-width="0.800"/></g>
<g transform="translate(27.6 279) scale(0.95)"><path d="M-6 0H6" stroke="#2a7a9a" stroke-width="1.100"/><path d="M-2.500 -2L-0.500 0L-2.500 2M2.500 -2L0.500 0L2.500 2" stroke="#1f4f7a" stroke-width="0.900" fill="none"/></g>
<g transform="translate(27.6 294) scale(0.95)"><path d="M-5 5.500V-0.500L0 -5H5.500" fill="none" stroke="#333" stroke-width="1"/><path d="M-5 5.500H5.500" stroke="#555" stroke-width="0.700"/></g>
<g transform="translate(27.6 309) scale(0.95)"><path d="M-5 5.500V1C-5 -3 -2 -5 2 -5H5.500" fill="none" stroke="#333" stroke-width="1"/><path d="M-5 5.500H5.500V-5" stroke="#555" stroke-width="0.700" fill="none"/></g>
<g transform="translate(27.6 324) scale(0.95)"><path d="M-5 1L-2 -4H3L0 1ZM-3 4L0 -1H5.500L2.500 4Z" fill="#cfe4ee" stroke="#2a6a9a" stroke-width="0.900"/><path d="M-5.500 4.500L-3.500 2.500M3 -5.500L4.500 -3.500" stroke="#2a6a9a" stroke-width="0.800"/></g></svg>
<div class="abs" style="left:40px;top:446px;width:640px;height:10.5px;background:#cbcbcb;border-top:1px solid #777;box-sizing:border-box;"></div>
<div class="abs" style="left:170px;top:446px;width:389px;height:10.5px;background:linear-gradient(#8e8e8e,#bdbdbd 25%,#cfcfcf);"></div>
<div class="abs" style="left:559px;top:446px;width:121px;height:10.5px;background:#dfdfdd;"></div>
<div class="abs" style="left:561.5px;top:445.5px;width:11.5px;height:10.5px;background:#e8e8e8;border:1px solid #7a7a7a;box-sizing:border-box;"></div>
<svg class="abs" style="left:0;top:440px" width="680" height="20" viewBox="0 440 680 20"><rect x="40.5" y="447" width="9.100" height="8" fill="#dcdcdc" stroke="#8c8c8c" stroke-width="0.800"/>
<rect x="49.6" y="447" width="9.100" height="8" fill="#dcdcdc" stroke="#8c8c8c" stroke-width="0.800"/>
<rect x="58.7" y="447" width="9.100" height="8" fill="#dcdcdc" stroke="#8c8c8c" stroke-width="0.800"/>
<rect x="67.8" y="447" width="9.100" height="8" fill="#dcdcdc" stroke="#8c8c8c" stroke-width="0.800"/>
<path d="M46.500 448.800L43.500 451L46.500 453.200ZM43 448.800V453.200" fill="#9a9a9a" stroke="#9a9a9a" stroke-width="0.700"/>
<path d="M56 448.800L53 451L56 453.200Z" fill="#9a9a9a"/>
<path d="M62 448.800L65 451L62 453.200Z" fill="#7a7a7a"/>
<path d="M70.500 448.800L73.500 451L70.500 453.200ZM74.300 448.800V453.200" fill="#7a7a7a" stroke="#7a7a7a" stroke-width="0.700"/>
<path d="M78.500 445.500L82 455.500H103.500L108 445.500Z" fill="#fefcf2"/><path d="M78.500 446L82 455.300H103.500L108 446" fill="none" stroke="#444" stroke-width="0.800"/>
<path d="M106.500 446.500H138L134 455H110" fill="none" stroke="#555" stroke-width="0.800"/><path d="M140 455L144 446.500" stroke="#555" stroke-width="0.800"/>
<path d="M138 446.500H171L167 455H140" fill="none" stroke="#555" stroke-width="0.800"/>
<path d="M568.500 448.800L565.800 450.800L568.500 452.800Z" fill="#222"/></svg>
<div class="abs tabt" style="left:85.5px;top:446.500px;font-weight:bold;">模型</div>
<div class="abs tabt" style="left:113px;top:446.500px;">布局1</div>
<div class="abs tabt" style="left:144px;top:446.500px;">布局2</div>
<div class="abs" style="left:0;top:456.3px;width:680px;height:3.700px;background:#555;"></div>
<div class="abs" style="left:0;top:460px;width:10px;height:40px;background:#9c9c9c;border-radius:3px 0 0 0;"></div>
<div class="abs" style="left:9.500px;top:460px;width:670.500px;height:38.500px;background:#fff;"></div>
<div class="abs" style="left:9.500px;top:486px;width:670.500px;height:1px;background:#a8a8a8;"></div>
<div class="abs" style="left:0;top:498.500px;width:680px;height:1.500px;background:#4a4a4a;"></div>
<div class="abs cmdt" style="left:12px;top:461px;">settings\temp\别墅(修改)刘2012.06.29_1_1_5724.sv$ ...</div>
<div class="abs cmdt" style="left:12px;top:470.500px;">命令:</div>
<div class="abs cmdt" style="left:12px;top:487.500px;">命令:</div>
<!-- LB-END -->
</div>
</body></html>
